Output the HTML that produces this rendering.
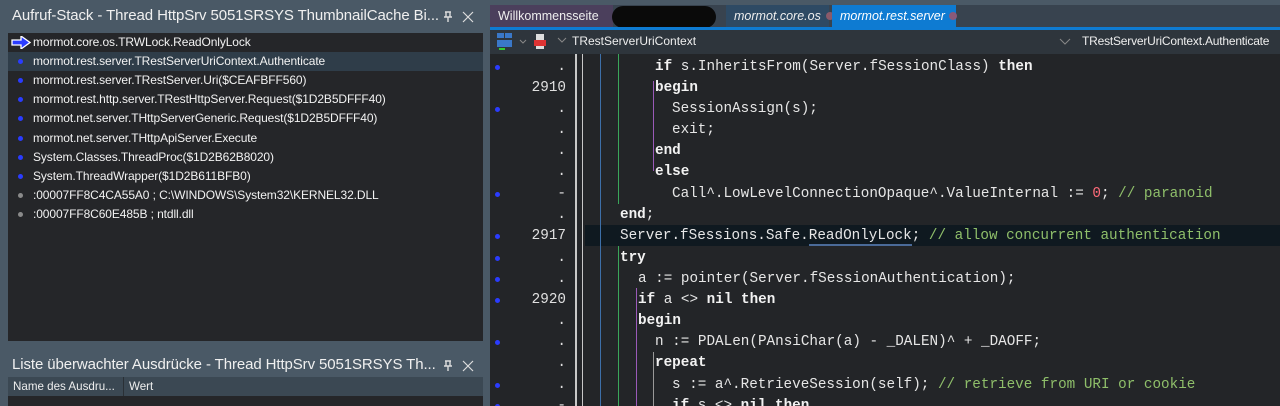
<!DOCTYPE html>
<html><head><meta charset="utf-8"><style>
*{margin:0;padding:0;box-sizing:border-box}
body{width:1280px;height:406px;overflow:hidden;background:#4a5966;font-family:"Liberation Sans",sans-serif;position:relative}
.abs{position:absolute}
.title{color:#f0f0f0;font-size:15px;white-space:nowrap;letter-spacing:-0.1px}
.row{position:absolute;left:8px;width:475px;height:19px;color:#f2f2f2;font-size:12px;line-height:19px;padding-left:25px;white-space:nowrap;letter-spacing:-0.1px}
.row i{position:absolute;left:10px;top:7px;width:5px;height:5px;border-radius:50%;background:#2a3cff}
.row i.g{background:#8a8a8a}
.code{position:absolute;left:490px;top:54px;width:790px;height:352px;background:#232528;overflow:hidden}
.ln{position:absolute;left:0;width:790px;height:21px;font-family:"Liberation Mono",monospace;font-size:14.3px;line-height:21px;color:#e6e6e6;white-space:pre}
.ln .n{position:absolute;left:0;width:76px;text-align:right;color:#e0e0e0}
.ln .d{position:absolute;left:5px;top:8px;width:5px;height:5px;border-radius:50%;background:#2a3cff}
.ln .t{position:absolute}
b{font-weight:bold;color:#f2f2f2}
.c{color:#8fbf6a}.r{color:#ff6b7a}
</style></head><body>
<div class="abs title" style="left:12px;top:7px">Aufruf-Stack - Thread HttpSrv 5051SRSYS ThumbnailCache Bi...</div>
<svg class="abs" style="left:443px;top:11px" width="10" height="12"><path d="M2 1h6M3 1v5M7 1v5M1 6h8M5 6v5" stroke="#ddd" stroke-width="1.4" fill="none"/></svg>
<svg class="abs" style="left:462px;top:11px" width="12" height="12"><path d="M1 1l10 10M11 1L1 11" stroke="#ddd" stroke-width="1.2"/></svg>
<div class="abs" style="left:8px;top:33px;width:475px;height:308px;background:#252629"></div>
<div class="abs" style="left:8px;top:52px;width:475px;height:19px;background:#2f3d49"></div>
<div class="row" style="top:33px"><svg style="position:absolute;left:3px;top:3px" width="20" height="13" viewBox="0 0 20 13"><path d="M1 4h9V0l9 6.5-9 6.5V9H1z" fill="#2a3cff" stroke="#fff" stroke-width="1.3"/></svg>mormot.core.os.TRWLock.ReadOnlyLock</div>
<div class="row" style="top:52px"><i></i>mormot.rest.server.TRestServerUriContext.Authenticate</div>
<div class="row" style="top:71px"><i></i>mormot.rest.server.TRestServer.Uri($CEAFBFF560)</div>
<div class="row" style="top:90px"><i></i>mormot.rest.http.server.TRestHttpServer.Request($1D2B5DFFF40)</div>
<div class="row" style="top:109px"><i></i>mormot.net.server.THttpServerGeneric.Request($1D2B5DFFF40)</div>
<div class="row" style="top:129px"><i></i>mormot.net.server.THttpApiServer.Execute</div>
<div class="row" style="top:148px"><i></i>System.Classes.ThreadProc($1D2B62B8020)</div>
<div class="row" style="top:167px"><i></i>System.ThreadWrapper($1D2B611BFB0)</div>
<div class="row" style="top:186px"><i class="g"></i>:00007FF8C4CA55A0 ; C:\WINDOWS\System32\KERNEL32.DLL</div>
<div class="row" style="top:205px"><i class="g"></i>:00007FF8C60E485B ; ntdll.dll</div>
<div class="abs title" style="left:12px;top:356px">Liste überwachter Ausdrücke - Thread HttpSrv 5051SRSYS Th...</div>
<svg class="abs" style="left:443px;top:360px" width="10" height="12"><path d="M2 1h6M3 1v5M7 1v5M1 6h8M5 6v5" stroke="#ddd" stroke-width="1.4" fill="none"/></svg>
<svg class="abs" style="left:462px;top:360px" width="12" height="12"><path d="M1 1l10 10M11 1L1 11" stroke="#ddd" stroke-width="1.2"/></svg>
<div class="abs" style="left:8px;top:377px;width:475px;height:19px;background:#3b4853"></div>
<div class="abs" style="left:123px;top:377px;width:1px;height:19px;background:#2a3036"></div>
<div class="abs" style="left:13px;top:377px;color:#eee;font-size:11.6px;line-height:19px">Name des Ausdru...</div>
<div class="abs" style="left:129px;top:377px;color:#eee;font-size:11.6px;line-height:19px">Wert</div>
<div class="abs" style="left:8px;top:396px;width:475px;height:10px;background:#252629"></div>

<div class="abs" style="left:490px;top:5px;width:790px;height:23px;background:#38434f"></div>
<div class="abs" style="left:490px;top:5px;width:123px;height:23px;background:#4b3f5c;color:#eee;font-size:12.5px;line-height:23px;padding-left:8px">Willkommensseite</div>
<div class="abs" style="left:612px;top:6px;width:104px;height:22px;background:#0a0a0a;border-radius:11px"></div>
<div class="abs" style="left:726px;top:5px;width:103px;height:23px;background:#2e4a64;color:#eee;font-size:12.5px;line-height:23px;padding-left:8px;font-style:italic;white-space:nowrap">mormot.core.os <span style="display:inline-block;width:8px;height:8px;border-radius:50%;background:#8a5a6a;margin-left:2px"></span></div>
<div class="abs" style="left:832px;top:5px;width:124px;height:23px;background:#0e7bd2;color:#fff;font-size:12.5px;line-height:23px;padding-left:8px;font-style:italic;white-space:nowrap">mormot.rest.server <span style="display:inline-block;width:8px;height:8px;border-radius:50%;background:#8a5a7a;margin-left:1px"></span></div>
<div class="abs" style="left:490px;top:27px;width:790px;height:3px;background:#0e7bd2"></div>
<div class="abs" style="left:490px;top:30px;width:790px;height:24px;background:#2e353c"></div>
<svg class="abs" style="left:496px;top:32px" width="60" height="20"><rect x="1" y="1" width="7" height="5" fill="#3a78c8"/><rect x="9" y="1" width="7" height="5" fill="#3a78c8"/><rect x="1" y="8" width="15" height="7" fill="#3a78c8"/><path d="M3 17h6" stroke="#3c3" stroke-width="2"/><path d="M24 8l3 3 3-3" stroke="#888" fill="none"/><rect x="40" y="2" width="8" height="6" fill="#ddd"/><rect x="38" y="8" width="12" height="6" fill="#d33"/><rect x="40" y="14" width="8" height="3" fill="#ddd"/></svg>
<svg class="abs" style="left:557px;top:36px" width="10" height="8"><path d="M1 2l4 4 4-4" stroke="#888" fill="none"/></svg>
<div class="abs" style="left:572px;top:30px;color:#eee;font-size:12px;line-height:23px">TRestServerUriContext</div>
<svg class="abs" style="left:1059px;top:38px" width="12" height="8"><path d="M1 1l5 5 5-5" stroke="#888" fill="none"/></svg>
<div class="abs" style="left:1082px;top:30px;color:#eee;font-size:12px;line-height:23px;letter-spacing:-0.2px">TRestServerUriContext.Authenticate</div>

<div class="code">
<div class="abs" style="left:95px;top:171px;width:695px;height:21px;background:#0f1920"></div>
<div class="abs" style="left:85px;top:0;width:2px;height:352px;background:#c8c8c8"></div>
<div class="abs" style="left:92px;top:0;width:1px;height:352px;background:#c8c8c8"></div>
<div class="abs" style="left:110px;top:0;width:1px;height:352px;background:#3d6fa8"></div>
<div class="abs" style="left:128px;top:0;width:1px;height:150px;background:#3aa65a"></div>
<div class="abs" style="left:128px;top:192px;width:1px;height:160px;background:#3aa65a"></div>
<div class="abs" style="left:163px;top:27px;width:1px;height:90px;background:#9a5ab8"></div>
<div class="abs" style="left:146px;top:234px;width:1px;height:118px;background:#9a5ab8"></div>
<div class="abs" style="left:163px;top:298px;width:1px;height:54px;background:#999"></div>

<div class="ln" style="top:3px"><span class="d"></span><span class="n">.</span><span class="t" style="left:165px"><b>if</b> s.InheritsFrom(Server.fSessionClass) <b>then</b></span></div>
<div class="ln" style="top:24px"><span class="n">2910</span><span class="t" style="left:165px"><b>begin</b></span></div>
<div class="ln" style="top:45px"><span class="d"></span><span class="n">.</span><span class="t" style="left:182px">SessionAssign(s);</span></div>
<div class="ln" style="top:66px"><span class="n">.</span><span class="t" style="left:182px">exit;</span></div>
<div class="ln" style="top:87px"><span class="n">.</span><span class="t" style="left:165px"><b>end</b></span></div>
<div class="ln" style="top:108px"><span class="n">.</span><span class="t" style="left:165px"><b>else</b></span></div>
<div class="ln" style="top:130px"><span class="d"></span><span class="n">-</span><span class="t" style="left:182px">Call^.LowLevelConnectionOpaque^.ValueInternal := <span class="r">0</span>; <span class="c">// paranoid</span></span></div>
<div class="ln" style="top:151px"><span class="n">.</span><span class="t" style="left:130px"><b>end</b>;</span></div>
<div class="ln" style="top:172px"><span class="d"></span><span class="n">2917</span><span class="t" style="left:130px">Server.fSessions.Safe.<span style="border-bottom:2px solid #4a6a98">ReadOnlyLock</span>; <span class="c">// allow concurrent authentication</span></span></div>
<div class="ln" style="top:194px"><span class="d"></span><span class="n">.</span><span class="t" style="left:130px"><b>try</b></span></div>
<div class="ln" style="top:215px"><span class="d"></span><span class="n">.</span><span class="t" style="left:148px">a := pointer(Server.fSessionAuthentication);</span></div>
<div class="ln" style="top:236px"><span class="d"></span><span class="n">2920</span><span class="t" style="left:148px"><b>if</b> a &lt;&gt; <b>nil</b> <b>then</b></span></div>
<div class="ln" style="top:257px"><span class="n">.</span><span class="t" style="left:148px"><b>begin</b></span></div>
<div class="ln" style="top:278px"><span class="d"></span><span class="n">.</span><span class="t" style="left:165px">n := PDALen(PAnsiChar(a) - _DALEN)^ + _DAOFF;</span></div>
<div class="ln" style="top:299px"><span class="n">.</span><span class="t" style="left:165px"><b>repeat</b></span></div>
<div class="ln" style="top:321px"><span class="d"></span><span class="n">.</span><span class="t" style="left:182px">s := a^.RetrieveSession(self); <span class="c">// retrieve from URI or cookie</span></span></div>
<div class="ln" style="top:342px"><span class="d"></span><span class="n">-</span><span class="t" style="left:182px"><b>if</b> s &lt;&gt; <b>nil</b> <b>then</b></span></div>
</div>
</body></html>
